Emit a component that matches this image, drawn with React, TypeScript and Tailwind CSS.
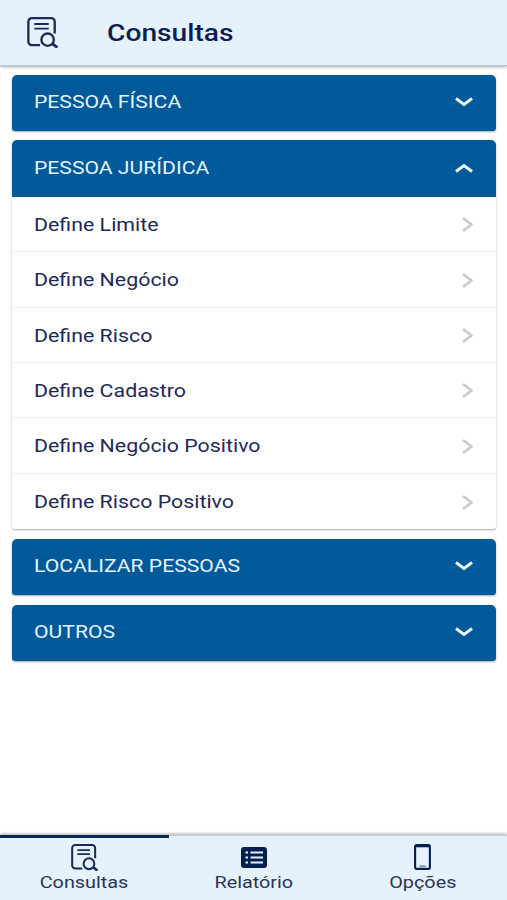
import React from "react";
import clsx from "clsx";

interface Section {
  title: string;
  items?: string[];
}

const sections: Section[] = [
  { title: "PESSOA FÍSICA" },
  {
    title: "PESSOA JURÍDICA",
    items: [
      "Define Limite",
      "Define Negócio",
      "Define Risco",
      "Define Cadastro",
      "Define Negócio Positivo",
      "Define Risco Positivo",
    ],
  },
  { title: "LOCALIZAR PESSOAS" },
  { title: "OUTROS" },
];

const SearchDocIcon = ({ className }: { className?: string }) => (
  <svg viewBox="0 0 32 32" fill="none" stroke="currentColor" strokeWidth={2.4} className={className}>
    <path d="M13.5 29H5a3.6 3.6 0 0 1-3.6-3.6V4.8A3.6 3.6 0 0 1 5 1.2h20a3.6 3.6 0 0 1 3.6 3.6V17" />
    <path d="M7.5 7.2h15M7.5 12h15" strokeWidth={1.9} />
    <circle cx="21.3" cy="23.4" r="6.4" />
    <path d="M26 27.4l5.4 4.2" strokeWidth={3} />
  </svg>
);

const ListIcon = ({ className }: { className?: string }) => (
  <svg viewBox="0 0 26 21" fill="none" className={className}>
    <rect width="26" height="21" rx="3" fill="#05204f" />
    <path d="M4.5 5.5H7M4.5 10.5H7M4.5 15.5H7M9.5 5.5h12.5M9.5 10.5h12.5M9.5 15.5h12.5" stroke="#e5f2fc" strokeWidth={2.2} />
  </svg>
);

const PhoneIcon = ({ className }: { className?: string }) => (
  <svg viewBox="0 0 17 26" fill="none" className={className}>
    <rect x="1.1" y="1.1" width="14.8" height="23.8" rx="1.6" stroke="#05204f" strokeWidth={2.1} />
    <path d="M2 2.3h13" stroke="#05204f" strokeWidth={2} />
    <path d="M5.5 22.2h6" stroke="#05204f" strokeWidth={1.6} opacity={0.5} />
  </svg>
);

const Chevron = ({ up }: { up?: boolean }) => (
  <svg viewBox="0 0 18 10" fill="none" className={clsx("w-[18px] h-[10px] -mt-px text-[#effaff]", up && "rotate-180")}>
    <path d="M1 1.5l8 6 8-6" stroke="currentColor" strokeWidth={2.9} />
  </svg>
);

const tabs = [
  { label: "Consultas", icon: <SearchDocIcon className="w-[27px] h-[27px]" />, active: true },
  { label: "Relatório", icon: <ListIcon className="w-[26px] h-[21px]" /> },
  { label: "Opções", icon: <PhoneIcon className="w-[17px] h-[26px]" /> },
];

export default function App() {
  return (
    <div className="flex flex-col w-full h-screen bg-white overflow-hidden font-[Roboto,sans-serif] text-[#1f2858]">
      <header className="flex items-center h-[66px] shrink-0 bg-[#e5f2fc] pl-[27px] border-b border-[#bfc5cb] shadow-[0_1px_3px_rgba(0,0,0,0.35)]">
        <SearchDocIcon className="w-[31px] h-[31px] text-[#1b2b55]" />
        <h1 className="ml-[49px] mt-[2px] text-[23px] leading-7 font-medium text-[#0d1f52] origin-left scale-x-[1.225]">Consultas</h1>
      </header>

      <main className="flex-1 flex flex-col gap-[9.5px] px-[11.5px] pt-[8.5px]">
        {sections.map((section) => (
          <section key={section.title} className="rounded-t-[5px] rounded-b-[3px] shadow-[0_1px_2px_rgba(0,0,0,0.35)]">
            <button
              type="button"
              className={clsx(
                "flex items-center justify-between w-full h-[56.4px] pl-[22.5px] pr-[23px] bg-[#005998] text-left",
                section.items ? "rounded-t-[5px]" : "rounded-t-[5px] rounded-b-[3px]"
              )}
            >
              <span className="text-[18px] leading-6 text-[#e3f4ff] origin-left scale-x-[1.175] -mt-[2px]">{section.title}</span>
              <Chevron up={!!section.items} />
            </button>
            {section.items && (
              <ul>
                {section.items.map((item) => (
                  <li key={item} className="flex items-center justify-between h-[55.4px] pl-[22.5px] pr-[23px] border-b border-[#efefef] last:border-b-0">
                    <span className="text-[18px] leading-6 origin-left scale-x-[1.187] mt-[1.5px]">{item}</span>
                    <svg viewBox="0 0 11 15" fill="none" className="w-[11px] h-[15px] mt-[1.5px]">
                      <path d="M1 1l8.5 6.5L1 14" stroke="#c8c8c8" strokeWidth={2.5} />
                    </svg>
                  </li>
                ))}
              </ul>
            )}
          </section>
        ))}
      </main>

      <nav className="grid grid-cols-3 h-[65px] shrink-0 bg-[#e5f2fc] shadow-[0_-1px_3px_rgba(0,0,0,0.35)]">
        {tabs.map((tab) => (
          <div
            key={tab.label}
            className={clsx(
              "flex flex-col items-center text-[#1b2b55]",
              tab.active ? "border-t-[3px] border-[#0a2a55]" : "border-t pt-0.5 border-[#cbcdd3]"
            )}
          >
            <div className="flex items-center justify-center h-[28px] mt-[5px]">{tab.icon}</div>
            <span className="mt-px text-[17px] leading-5 text-[#2b3556] scale-x-[1.165]">{tab.label}</span>
          </div>
        ))}
      </nav>
    </div>
  );
}
